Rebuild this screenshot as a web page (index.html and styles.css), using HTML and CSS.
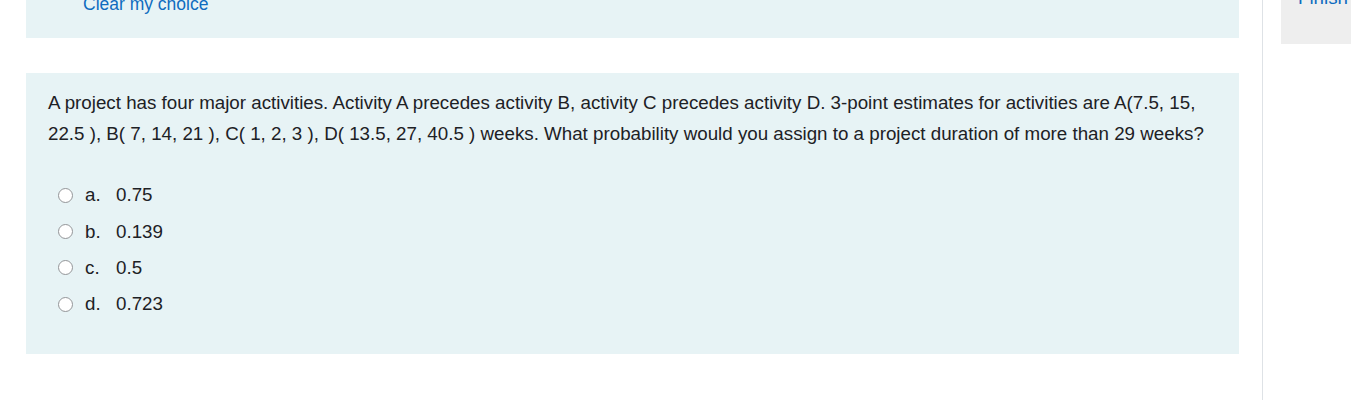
FILE: index.html
```html
<!DOCTYPE html>
<html lang="en">
<head>
<meta charset="utf-8">
<title>Quiz</title>
<link rel="stylesheet" href="styles.css">
</head>
<body>
<div class="page">
  <main class="main">
    <div class="box box-top">
      <a class="clear" href="#">Clear my choice</a>
    </div>
    <div class="box box-q">
      <p class="qtext">A project has four major activities. Activity A precedes activity B, activity C precedes activity D. 3-point estimates for activities are A(7.5, 15, 22.5 ), B( 7, 14, 21 ), C( 1, 2, 3 ), D( 13.5, 27, 40.5 ) weeks. What probability would you assign to a project duration of more than 29 weeks?</p>
      <div class="answers">
        <div class="opt"><span class="radio"></span><span class="letter">a.</span><span class="val">0.75</span></div>
        <div class="opt"><span class="radio"></span><span class="letter">b.</span><span class="val">0.139</span></div>
        <div class="opt"><span class="radio"></span><span class="letter">c.</span><span class="val">0.5</span></div>
        <div class="opt"><span class="radio"></span><span class="letter">d.</span><span class="val">0.723</span></div>
      </div>
    </div>
  </main>
  <aside class="side">
    <div class="finish"><a href="#" class="finish-link">Finish</a></div>
  </aside>
</div>
</body>
</html>
```
FILE: styles.css
```css
html, body {
  margin: 0;
  padding: 0;
  background: #fff;
  overflow: hidden;
  height: 400px;
}
body {
  font-family: "Liberation Sans", Arial, sans-serif;
  color: #1d2125;
}
.page {
  display: flex;
  height: 400px;
}
.main {
  width: 1213px;
  padding-left: 26px;
  padding-right: 23px;
  flex: none;
}
.box {
  background: #e7f3f5;
}
.box-top {
  margin-top: -6px;
  height: 44px;
  box-sizing: border-box;
  padding-left: 57px;
}
.clear {
  display: block;
  font-size: 17.5px;
  line-height: 20px;
  color: #0f6cbf;
  text-decoration: none;
}
.box-q {
  margin-top: 35px;
  height: 281px;
  box-sizing: border-box;
  padding: 14px 22px 0 22px;
}
.qtext {
  margin: 0;
  font-size: 18.75px;
  line-height: 31px;
}
.answers {
  margin-top: 28px;
  padding-left: 11px;
}
.opt {
  display: flex;
  align-items: center;
  height: 36.4px;
  font-size: 18.75px;
}
.radio {
  width: 15px;
  height: 15px;
  box-sizing: border-box;
  border: 1px solid #939598;
  border-radius: 50%;
  background: #fff;
  flex: none;
  margin-left: -1px;
}
.letter {
  margin-left: 12px;
  width: 31px;
}
.side {
  flex: 1;
  border-left: 1px solid #dee2e6;
  padding-left: 18px;
}
.finish {
  background: #eeeeee;
  height: 44px;
  position: relative;
  overflow: hidden;
}
.finish-link {
  position: absolute;
  left: 17px;
  top: -12px;
  font-size: 18.75px;
  line-height: 20px;
  color: #0f6cbf;
  text-decoration: none;
}
```
